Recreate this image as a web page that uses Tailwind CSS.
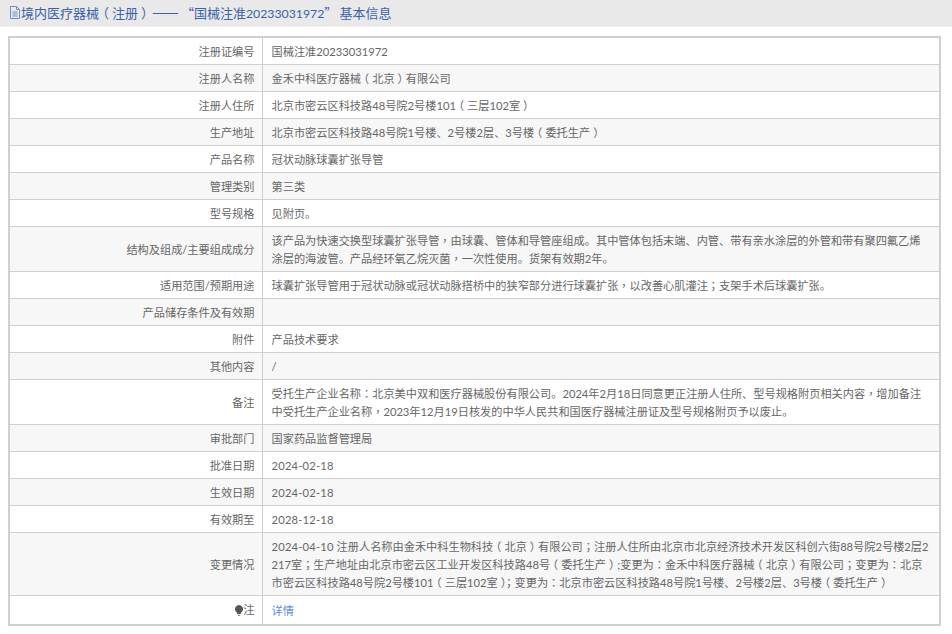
<!DOCTYPE html>
<html>
<head>
<meta charset="UTF-8">
<title>基本信息</title>
<script src="https://cdn.jsdelivr.net/npm/@tailwindcss/browser@4"></script>
</head>
<body class="bg-white font-['Lato','Noto_Sans_CJK_SC',sans-serif] text-[11.2px] leading-[18px] text-[#666666]">
<div class="flex h-[27px] items-center border-b border-[#eeeeee] bg-[#e9e9e9] pb-[2px] pl-[9px] font-['Noto_Sans_CJK_SC',sans-serif] text-[13px] text-[#3a62a8]">
  <svg class="h-[13px] w-[12px] shrink-0" viewBox="0 0 12 13" fill="none" stroke="#6f8fc4" stroke-width="1">
    <path d="M1.5 .5H7.5L10.5 3.5V12.5H1.5Z"/><path d="M7.5 .5V3.5H10.5M3.5 6H8.5M3.5 8H8.5M3.5 10H8.5"/>
  </svg>
  <span>境内医疗器械<span class="-ml-[3px] mr-[3px]">（</span>注册<span class="ml-[3px] -mr-[3px]">）</span><span class="ml-[1px] mr-[2px] text-[16px] leading-none">——</span>“国械注准<span class="font-['Lato'] text-[12.3px] leading-none">20233031972</span><span class="mr-[2px]">”</span>基本信息</span>
</div>
<table class="mt-[9px] ml-[8px] w-[933px] table-fixed border-collapse border-2 border-[#d0d0d0]">
  <colgroup><col class="w-[253px]"><col></colgroup>
  <tbody>
    <tr class="border-b border-[#cfcfcf]"><th class="border-r border-[#cfcfcf] pt-[5px] pb-[3px] pr-[7px] text-right font-normal">注册证编号</th><td class="pt-[5px] pb-[3px] pl-[9px] pr-[10px] break-all">国械注准20233031972</td></tr>
    <tr class="border-b border-[#cfcfcf] bg-[#f7f7f7]"><th class="border-r border-[#cfcfcf] pt-[5px] pb-[3px] pr-[7px] text-right font-normal">注册人名称</th><td class="pt-[5px] pb-[3px] pl-[9px] pr-[10px] break-all">金禾中科医疗器械<span class="-ml-[3px] mr-[3px]">（</span>北京<span class="ml-[3px] -mr-[3px]">）</span>有限公司</td></tr>
    <tr class="border-b border-[#cfcfcf]"><th class="border-r border-[#cfcfcf] pt-[5px] pb-[3px] pr-[7px] text-right font-normal">注册人住所</th><td class="pt-[5px] pb-[3px] pl-[9px] pr-[10px] break-all">北京市密云区科技路48号院2号楼101<span class="-ml-[3px] mr-[3px]">（</span>三层102室<span class="ml-[3px] -mr-[3px]">）</span></td></tr>
    <tr class="border-b border-[#cfcfcf] bg-[#f7f7f7]"><th class="border-r border-[#cfcfcf] pt-[5px] pb-[3px] pr-[7px] text-right font-normal">生产地址</th><td class="pt-[5px] pb-[3px] pl-[9px] pr-[10px] break-all">北京市密云区科技路48号院1号楼、2号楼2层、3号楼<span class="-ml-[3px] mr-[3px]">（</span>委托生产<span class="ml-[3px] -mr-[3px]">）</span></td></tr>
    <tr class="border-b border-[#cfcfcf]"><th class="border-r border-[#cfcfcf] pt-[5px] pb-[3px] pr-[7px] text-right font-normal">产品名称</th><td class="pt-[5px] pb-[3px] pl-[9px] pr-[10px] break-all">冠状动脉球囊扩张导管</td></tr>
    <tr class="border-b border-[#cfcfcf] bg-[#f7f7f7]"><th class="border-r border-[#cfcfcf] pt-[5px] pb-[3px] pr-[7px] text-right font-normal">管理类别</th><td class="pt-[5px] pb-[3px] pl-[9px] pr-[10px] break-all">第三类</td></tr>
    <tr class="border-b border-[#cfcfcf]"><th class="border-r border-[#cfcfcf] pt-[5px] pb-[3px] pr-[7px] text-right font-normal">型号规格</th><td class="pt-[5px] pb-[3px] pl-[9px] pr-[10px] break-all">见附页。</td></tr>
    <tr class="border-b border-[#cfcfcf] bg-[#f7f7f7]"><th class="border-r border-[#cfcfcf] pt-[5px] pb-[3px] pr-[7px] text-right font-normal">结构及组成/主要组成成分</th><td class="pt-[5px] pb-[3px] pl-[9px] pr-[10px] break-all">该产品为快速交换型球囊扩张导管<span class="font-['Noto_Sans_CJK_TC'] leading-none">，</span>由球囊、管体和导管座组成。其中管体包括末端、内管、带有亲水涂层的外管和带有聚四氟乙烯涂层的海波管。产品经环氧乙烷灭菌<span class="font-['Noto_Sans_CJK_TC'] leading-none">，</span>一次性使用。货架有效期2年。</td></tr>
    <tr class="border-b border-[#cfcfcf]"><th class="border-r border-[#cfcfcf] pt-[5px] pb-[3px] pr-[7px] text-right font-normal">适用范围/预期用途</th><td class="pt-[5px] pb-[3px] pl-[9px] pr-[10px] break-all">球囊扩张导管用于冠状动脉或冠状动脉搭桥中的狭窄部分进行球囊扩张<span class="font-['Noto_Sans_CJK_TC'] leading-none">，</span>以改善心肌灌注<span class="font-['Noto_Sans_CJK_TC'] leading-none">；</span>支架手术后球囊扩张。</td></tr>
    <tr class="border-b border-[#cfcfcf] bg-[#f7f7f7]"><th class="border-r border-[#cfcfcf] pt-[5px] pb-[3px] pr-[7px] text-right font-normal">产品储存条件及有效期</th><td class="h-[27px] pt-[5px] pb-[3px] pl-[9px] pr-[10px]"></td></tr>
    <tr class="border-b border-[#cfcfcf]"><th class="border-r border-[#cfcfcf] pt-[5px] pb-[3px] pr-[7px] text-right font-normal">附件</th><td class="pt-[5px] pb-[3px] pl-[9px] pr-[10px] break-all">产品技术要求</td></tr>
    <tr class="border-b border-[#cfcfcf] bg-[#f7f7f7]"><th class="border-r border-[#cfcfcf] pt-[5px] pb-[3px] pr-[7px] text-right font-normal">其他内容</th><td class="pt-[5px] pb-[3px] pl-[9px] pr-[10px] break-all">/</td></tr>
    <tr class="border-b border-[#cfcfcf]"><th class="border-r border-[#cfcfcf] pt-[5px] pb-[3px] pr-[7px] text-right font-normal">备注</th><td class="pt-[5px] pb-[3px] pl-[9px] pr-[10px] break-all">受托生产企业名称<span class="font-['Noto_Sans_CJK_TC'] leading-none">：</span>北京美中双和医疗器械股份有限公司。2024年2月18日同意更正注册人住所、型号规格附页相关内容<span class="font-['Noto_Sans_CJK_TC'] leading-none">，</span>增加备注中受托生产企业名称<span class="font-['Noto_Sans_CJK_TC'] leading-none">，</span>2023年12月19日核发的中华人民共和国医疗器械注册证及型号规格附页予以废止。</td></tr>
    <tr class="border-b border-[#cfcfcf] bg-[#f7f7f7]"><th class="border-r border-[#cfcfcf] pt-[5px] pb-[3px] pr-[7px] text-right font-normal">审批部门</th><td class="pt-[5px] pb-[3px] pl-[9px] pr-[10px] break-all">国家药品监督管理局</td></tr>
    <tr class="border-b border-[#cfcfcf]"><th class="border-r border-[#cfcfcf] pt-[5px] pb-[3px] pr-[7px] text-right font-normal">批准日期</th><td class="pt-[5px] pb-[3px] pl-[9px] pr-[10px] break-all tracking-[0.2px]">2024-02-18</td></tr>
    <tr class="border-b border-[#cfcfcf] bg-[#f7f7f7]"><th class="border-r border-[#cfcfcf] pt-[5px] pb-[3px] pr-[7px] text-right font-normal">生效日期</th><td class="pt-[5px] pb-[3px] pl-[9px] pr-[10px] break-all tracking-[0.2px]">2024-02-18</td></tr>
    <tr class="border-b border-[#cfcfcf]"><th class="border-r border-[#cfcfcf] pt-[5px] pb-[3px] pr-[7px] text-right font-normal">有效期至</th><td class="pt-[5px] pb-[3px] pl-[9px] pr-[10px] break-all tracking-[0.2px]">2028-12-18</td></tr>
    <tr class="border-b border-[#cfcfcf] bg-[#f7f7f7]"><th class="border-r border-[#cfcfcf] pt-[5px] pb-[3px] pr-[7px] text-right font-normal">变更情况</th><td class="pt-[5px] pb-[3px] pl-[9px] pr-[10px] break-all"><span class="tracking-[0.2px]">2024-04-10</span> 注册人名称由金禾中科生物科技<span class="-ml-[3px] mr-[3px]">（</span>北京<span class="ml-[3px] -mr-[3px]">）</span>有限公司<span class="font-['Noto_Sans_CJK_TC'] leading-none">；</span>注册人住所由北京市北京经济技术开发区科创六街88号院2号楼2层2217室<span class="font-['Noto_Sans_CJK_TC'] leading-none">；</span>生产地址由北京市密云区工业开发区科技路48号<span class="-ml-[3px] mr-[3px]">（</span>委托生产<span class="ml-[3px] -mr-[3px]">）</span>;变更为<span class="font-['Noto_Sans_CJK_TC'] leading-none">：</span>金禾中科医疗器械<span class="-ml-[3px] mr-[3px]">（</span>北京<span class="ml-[3px] -mr-[3px]">）</span>有限公司<span class="font-['Noto_Sans_CJK_TC'] leading-none">；</span>变更为<span class="font-['Noto_Sans_CJK_TC'] leading-none">：</span>北京市密云区科技路48号院2号楼101<span class="-ml-[3px] mr-[3px]">（</span>三层102室<span class="ml-[3px] -mr-[3px]">）</span><span class="font-['Noto_Sans_CJK_TC'] leading-none">；</span>变更为<span class="font-['Noto_Sans_CJK_TC'] leading-none">：</span>北京市密云区科技路48号院1号楼、2号楼2层、3号楼<span class="-ml-[3px] mr-[3px]">（</span>委托生产<span class="ml-[3px] -mr-[3px]">）</span></td></tr>
    <tr><th class="border-r border-[#cfcfcf] pt-[5px] pb-[3px] pr-[7px] text-right font-normal"><span class="inline-flex items-center justify-end"><svg class="h-[11px] w-[8px]" viewBox="0 0 8 11"><path d="M4 0a4 4 0 0 1 2.4 7.2L5.6 9H2.4L1.6 7.2A4 4 0 0 1 4 0Z" fill="#555555"/><path d="M2.6 9.7H5.4L4.8 11H3.2Z" fill="#888888"/></svg>注</span></th><td class="pt-[5px] pb-[3px] pl-[9px] pr-[10px] text-[#5b8fe0]">详情</td></tr>
  </tbody>
</table>
</body>
</html>
